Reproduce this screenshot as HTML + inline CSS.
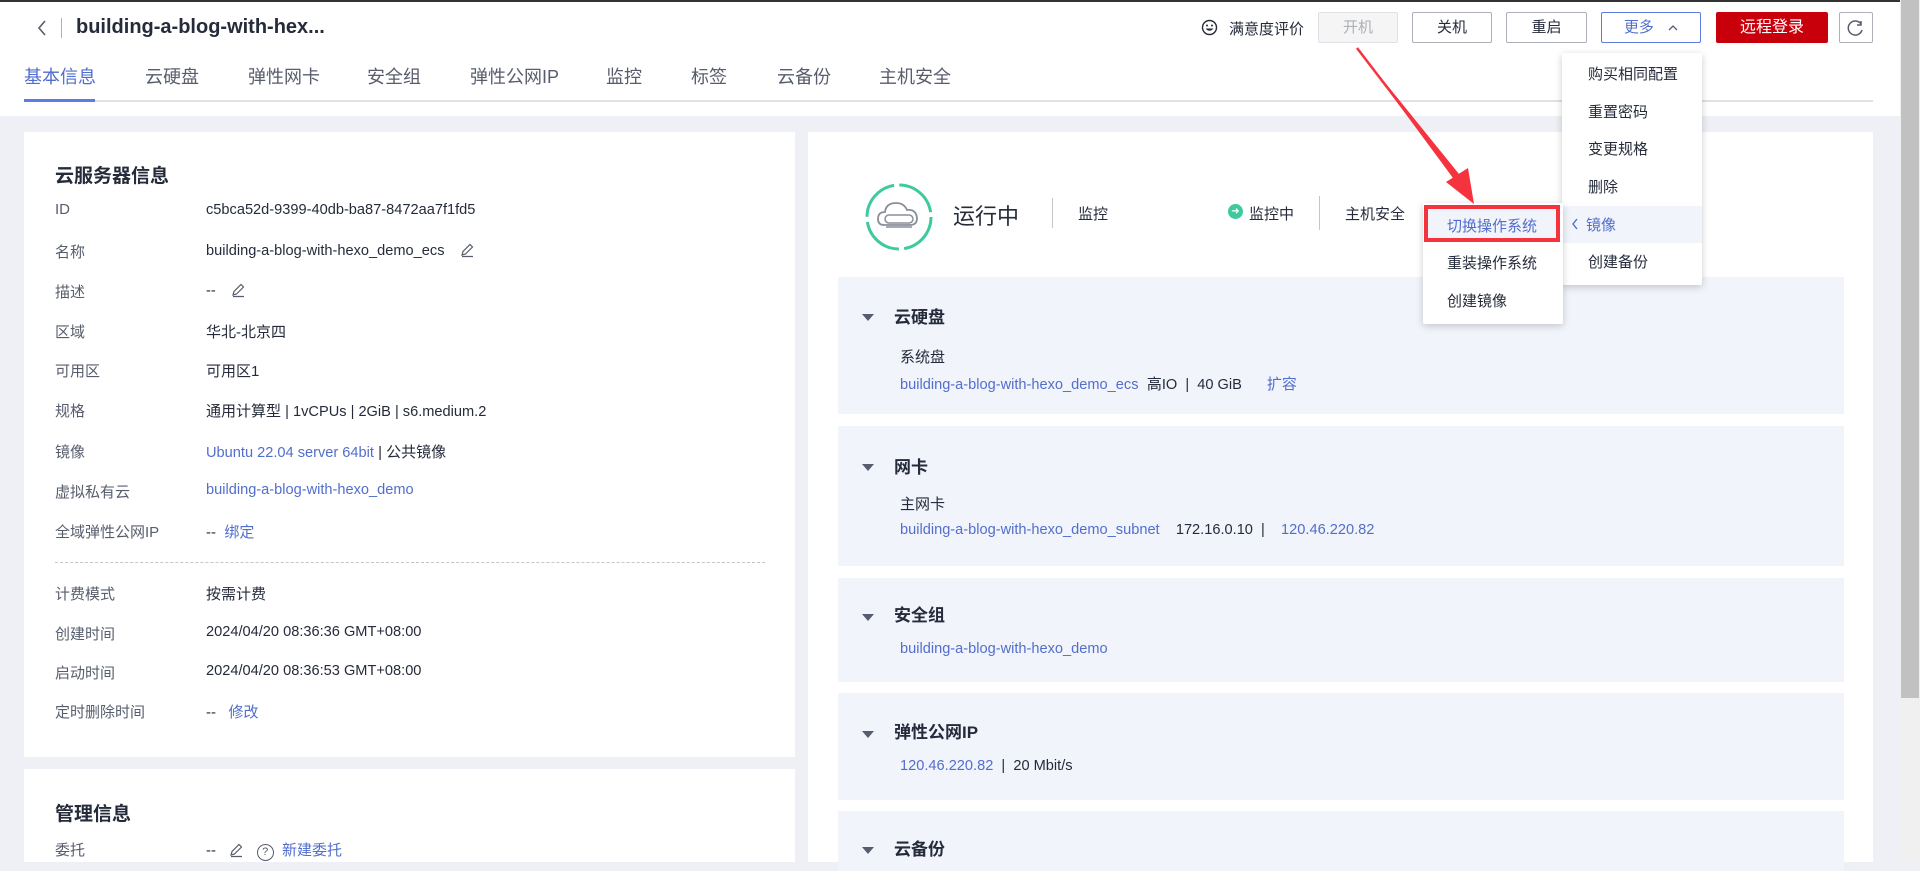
<!DOCTYPE html>
<html><head><meta charset="utf-8"><style>
*{box-sizing:border-box;margin:0;padding:0}
body{width:1920px;height:862px;overflow:hidden;background:#eef0f5;font-family:"Liberation Sans","Noto Sans CJK SC",sans-serif;font-size:15px;color:#252b3a;position:relative}
.a{position:absolute;white-space:nowrap}
.e{font-size:14.6px}
.lnk{color:#526ecc}
.lbl{color:#575d6c}
.btn{position:absolute;top:12px;height:31px;border:1px solid #adb0b8;border-radius:2px;background:#fff;text-align:center;line-height:29px;font-size:15px}
.sec{position:absolute;left:838px;width:1006px;background:#f1f4fb}
.tri{position:absolute;width:0;height:0;border-left:6px solid transparent;border-right:6px solid transparent;border-top:7px solid #575d6c}
.h{font-weight:bold;font-size:17px}
.tab{position:absolute;top:63px;font-size:18px;color:#575d6c;white-space:nowrap}
</style></head><body>
<div class="a" style="left:0;top:0;width:1920px;height:116px;background:#fff"></div>
<div class="a" style="left:0;top:0;width:1920px;height:2px;background:#333"></div>
<svg class="a" style="left:36px;top:19px" width="12" height="18"><path d="M9 2 L3 9 L9 16" stroke="#575d6c" stroke-width="1.6" fill="none"/></svg>
<div class="a" style="left:61px;top:18px;width:1px;height:20px;background:#adb0b8"></div>
<div class="a" style="left:76px;top:16px;font-size:20px;font-weight:bold">building-a-blog-with-hex...</div>
<div class="tab" style="left:24px;color:#526ecc">基本信息</div>
<div class="tab" style="left:145px">云硬盘</div>
<div class="tab" style="left:248px">弹性网卡</div>
<div class="tab" style="left:367px">安全组</div>
<div class="tab" style="left:470px">弹性公网IP</div>
<div class="tab" style="left:606px">监控</div>
<div class="tab" style="left:691px">标签</div>
<div class="tab" style="left:777px">云备份</div>
<div class="tab" style="left:879px">主机安全</div>
<div class="a" style="left:24px;top:100px;width:1849px;height:2px;background:#dfe1e6"></div>
<div class="a" style="left:24px;top:99px;width:71px;height:3px;background:#5e7ce0"></div>
<svg class="a" style="left:1201px;top:19px" width="17" height="17"><circle cx="8.5" cy="8.5" r="7" stroke="#252b3a" stroke-width="1.4" fill="none"/><circle cx="6" cy="6.5" r="1" fill="#252b3a"/><circle cx="11" cy="6.5" r="1" fill="#252b3a"/><path d="M4.5 9.5 Q8.5 14 12.5 9.5Z" fill="#252b3a"/></svg>
<div class="a" style="left:1229px;top:18px;font-size:15px">满意度评价</div>
<div class="btn" style="left:1318px;width:80px;background:#f5f5f6;border-color:#dfe1e6;color:#adb0b8">开机</div>
<div class="btn" style="left:1412px;width:80px">关机</div>
<div class="btn" style="left:1506px;width:81px">重启</div>
<div class="btn" style="left:1601px;width:100px;border-color:#5e7ce0;color:#526ecc">更多 <svg width="10" height="8" style="margin-left:10px"><path d="M1 6 L5 2 L9 6" stroke="#575d6c" stroke-width="1.3" fill="none"/></svg></div>
<div class="btn" style="left:1716px;width:112px;background:#c7000b;border-color:#c7000b;color:#fff;font-size:16px">远程登录</div>
<div class="btn" style="left:1839px;width:34px"><svg width="20" height="20" style="margin-top:5px"><path d="M15 6 A7 7 0 1 0 16 12" stroke="#575d6c" stroke-width="1.5" fill="none"/><path d="M15 3 V7 H11" stroke="#575d6c" stroke-width="1.5" fill="none"/></svg></div>
<div class="a" style="left:1900px;top:0;width:20px;height:862px;background:#f0f0f0"></div>
<div class="a" style="left:1901px;top:0;width:18px;height:698px;background:#c1c1c1"></div>
<div class="a" style="left:24px;top:132px;width:771px;height:625px;background:#fff"></div>
<div class="a h" style="left:55px;top:161px;font-size:19px">云服务器信息</div>
<div class="a lbl" style="left:55px;top:201px">ID</div><div class="a e" style="left:206px;top:202px">c5bca52d-9399-40db-ba87-8472aa7f1fd5</div>
<div class="a lbl" style="left:55px;top:241px">名称</div><div class="a e" style="left:206px;top:242px">building-a-blog-with-hexo_demo_ecs <svg width="16" height="16" style="margin-left:10px;vertical-align:-3px"><path d="M3 13 L4 9.5 L11 2.5 L13.5 5 L6.5 12 Z M3 14.5 H14" stroke="#575d6c" stroke-width="1.2" fill="none"/></svg></div>
<div class="a lbl" style="left:55px;top:281px">描述</div><div class="a e" style="left:206px;top:282px">-- <svg width="16" height="16" style="margin-left:10px;vertical-align:-3px"><path d="M3 13 L4 9.5 L11 2.5 L13.5 5 L6.5 12 Z M3 14.5 H14" stroke="#575d6c" stroke-width="1.2" fill="none"/></svg></div>
<div class="a lbl" style="left:55px;top:321px">区域</div><div class="a" style="left:206px;top:321px">华北-北京四</div>
<div class="a lbl" style="left:55px;top:360px">可用区</div><div class="a" style="left:206px;top:360px">可用区1</div>
<div class="a lbl" style="left:55px;top:400px">规格</div><div class="a" style="left:206px;top:400px">通用计算型 <span class="e">| 1vCPUs | 2GiB | s6.medium.2</span></div>
<div class="a lbl" style="left:55px;top:441px">镜像</div><div class="a" style="left:206px;top:441px"><span class="lnk e">Ubuntu 22.04 server 64bit</span> | 公共镜像</div>
<div class="a lbl" style="left:55px;top:481px">虚拟私有云</div><div class="a lnk e" style="left:206px;top:482px">building-a-blog-with-hexo_demo</div>
<div class="a lbl" style="left:55px;top:521px">全域弹性公网IP</div><div class="a" style="left:206px;top:521px">-- &nbsp;<span class="lnk">绑定</span></div>
<div class="a" style="left:55px;top:562px;width:710px;border-top:1px dashed #c4c6cc"></div>
<div class="a lbl" style="left:55px;top:583px">计费模式</div><div class="a" style="left:206px;top:583px">按需计费</div>
<div class="a lbl" style="left:55px;top:623px">创建时间</div><div class="a e" style="left:206px;top:624px">2024/04/20 08:36:36 GMT+08:00</div>
<div class="a lbl" style="left:55px;top:662px">启动时间</div><div class="a e" style="left:206px;top:663px">2024/04/20 08:36:53 GMT+08:00</div>
<div class="a lbl" style="left:55px;top:701px">定时删除时间</div><div class="a" style="left:206px;top:701px">-- &nbsp;&nbsp;<span class="lnk">修改</span></div>
<div class="a" style="left:24px;top:769px;width:771px;height:93px;background:#fff"></div>
<div class="a h" style="left:55px;top:799px;font-size:19px">管理信息</div>
<div class="a lbl" style="left:55px;top:839px">委托</div><div class="a" style="left:206px;top:839px">-- <svg width="16" height="16" style="margin-left:8px;vertical-align:-3px"><path d="M3 13 L4 9.5 L11 2.5 L13.5 5 L6.5 12 Z M3 14.5 H14" stroke="#575d6c" stroke-width="1.2" fill="none"/></svg> &nbsp; <span style="display:inline-block;width:17px;height:17px;border:1.3px solid #575d6c;border-radius:50%;font-size:11px;text-align:center;line-height:15px;color:#575d6c">?</span> &nbsp;<span class="lnk">新建委托</span></div>
<div class="a" style="left:808px;top:132px;width:1065px;height:730px;background:#fff"></div>
<svg class="a" style="left:864px;top:182px" width="70" height="70"><circle cx="35" cy="35" r="32" stroke="#3ec99e" stroke-width="3" fill="none" stroke-dasharray="45 5.3"/><path d="M20 43 Q14 43 14 37 Q14 30 21 30 Q22 21 32 21 Q40 21 43 28 Q52 27 53 36 Q53 43 46 43Z" stroke="#8a8e99" stroke-width="1.8" fill="none"/><rect x="21" y="33" width="28" height="8" rx="4" stroke="#8a8e99" stroke-width="1.5" fill="none"/><line x1="22" y1="45" x2="48" y2="45" stroke="#8a8e99" stroke-width="1.5"/></svg>
<div class="a" style="left:953px;top:199px;font-size:22px">运行中</div>
<div class="a" style="left:1052px;top:198px;width:1px;height:30px;background:#c4c6cc"></div>
<div class="a" style="left:1078px;top:203px">监控</div>
<div class="a" style="left:1228px;top:204px;width:15px;height:15px;border-radius:50%;background:#3ec99e;color:#fff;font-size:10px;line-height:15px;text-align:center">➜</div>
<div class="a" style="left:1249px;top:203px">监控中</div>
<div class="a" style="left:1319px;top:196px;width:1px;height:34px;background:#c4c6cc"></div>
<div class="a" style="left:1345px;top:203px">主机安全</div>
<div class="sec" style="top:277px;height:137px"></div>
<div class="tri" style="left:862px;top:314px"></div><div class="a h" style="left:894px;top:303px">云硬盘</div>
<div class="a" style="left:900px;top:346px">系统盘</div>
<div class="a" style="left:900px;top:373px"><span class="lnk e">building-a-blog-with-hexo_demo_ecs</span> &nbsp;高<span class="e">IO &nbsp;| &nbsp;40 GiB</span> &nbsp;&nbsp;&nbsp;&nbsp;&nbsp;<span class="lnk">扩容</span></div>
<div class="sec" style="top:426px;height:140px"></div>
<div class="tri" style="left:862px;top:464px"></div><div class="a h" style="left:894px;top:453px">网卡</div>
<div class="a" style="left:900px;top:493px">主网卡</div>
<div class="a e" style="left:900px;top:522px"><span class="lnk">building-a-blog-with-hexo_demo_subnet</span> &nbsp;&nbsp;&nbsp;172.16.0.10 &nbsp;| &nbsp;&nbsp;&nbsp;<span class="lnk">120.46.220.82</span></div>
<div class="sec" style="top:578px;height:104px"></div>
<div class="tri" style="left:862px;top:614px"></div><div class="a h" style="left:894px;top:601px">安全组</div>
<div class="a lnk e" style="left:900px;top:641px">building-a-blog-with-hexo_demo</div>
<div class="sec" style="top:693px;height:107px"></div>
<div class="tri" style="left:862px;top:731px"></div><div class="a h" style="left:894px;top:718px">弹性公网IP</div>
<div class="a e" style="left:900px;top:758px"><span class="lnk">120.46.220.82</span> &nbsp;| &nbsp;20 Mbit/s</div>
<div class="sec" style="top:811px;height:60px"></div>
<div class="tri" style="left:862px;top:847px"></div><div class="a h" style="left:894px;top:835px">云备份</div>
<div class="a" style="left:1562px;top:53px;width:140px;height:232px;background:#fff;box-shadow:0 2px 8px rgba(0,0,0,.2);border-radius:2px"></div>
<div class="a" style="left:1588px;top:63px">购买相同配置</div>
<div class="a" style="left:1588px;top:101px">重置密码</div>
<div class="a" style="left:1588px;top:138px">变更规格</div>
<div class="a" style="left:1588px;top:176px">删除</div>
<div class="a" style="left:1563px;top:206px;width:139px;height:37px;background:#f1f4fb"></div>
<svg class="a" style="left:1571px;top:218px" width="8" height="12"><path d="M6 1 L2 6 L6 11" stroke="#526ecc" stroke-width="1.4" fill="none"/></svg>
<div class="a lnk" style="left:1586px;top:214px">镜像</div>
<div class="a" style="left:1588px;top:251px">创建备份</div>
<div class="a" style="left:1423px;top:203px;width:140px;height:121px;background:#fff;box-shadow:0 2px 8px rgba(0,0,0,.2);border-radius:2px"></div>
<div class="a" style="left:1424px;top:205px;width:136px;height:37px;border:4px solid #f5333f;background:#f1f4fb"></div>
<div class="a lnk" style="left:1447px;top:215px">切换操作系统</div>
<div class="a" style="left:1447px;top:252px">重装操作系统</div>
<div class="a" style="left:1447px;top:290px">创建镜像</div>
<svg class="a" style="left:0;top:0" width="1920" height="862"><path d="M1357 48 L1453 178 L1459 174 Z" fill="#f5333f"/><line x1="1357" y1="48" x2="1458" y2="180" stroke="#f5333f" stroke-width="2.5"/><path d="M1446 182 L1474 204 L1468 168Z" fill="#f5333f"/></svg>
</body></html>
